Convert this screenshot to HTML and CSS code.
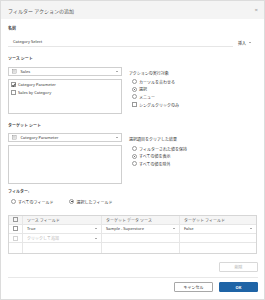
FILE: index.html
```html
<!DOCTYPE html>
<html>
<head>
<meta name="viewport" content="width=device-width, initial-scale=1">
<title>フィルター アクションの追加</title>
<link rel="stylesheet" href="styles.css">
</head>
<body>

<div class="dialog">
  <div class="titlebar">
    <span class="title">フィルター アクションの追加</span>
    <span class="close">×</span>
  </div>

  <div class="content">
    <div class="field-label">名前</div>
    <div class="name-row">
      <div class="name-input">Category Select</div>
      <div class="insert">挿入 <span class="caret"></span></div>
    </div>

    <!-- source sheet -->
    <div class="section-label source-label">ソース シート</div>
    <div class="sheet-row first-row">
      <div class="sheet-col">
        <div class="select">
          <svg class="sheet-icon" viewBox="0 0 6 6"><rect x="0.5" y="0.5" width="5" height="5" fill="none" stroke="#888" stroke-width="0.6"/><line x1="1.3" y1="2.2" x2="4.7" y2="2.2" stroke="#888" stroke-width="0.5"/><line x1="1.3" y1="3.8" x2="4.7" y2="3.8" stroke="#888" stroke-width="0.5"/></svg>
          <span class="select-text">Sales</span>
          <span class="caret"></span>
        </div>
        <div class="listbox source-list">
          <div class="check-item"><span class="cb checked"></span>Category Parameter</div>
          <div class="check-item"><span class="cb"></span>Sales by Category</div>
        </div>
      </div>
      <div class="option-col">
        <div class="option-title">アクションの実行対象</div>
        <div class="option-list">
          <div class="option"><span class="radio"></span>カーソルを合わせる</div>
          <div class="option"><span class="radio on"></span>選択</div>
          <div class="option"><span class="radio"></span>メニュー</div>
          <div class="option"><span class="cb"></span>シングルクリックのみ</div>
        </div>
      </div>
    </div>

    <!-- target sheet -->
    <div class="section-label target-label">ターゲット シート</div>
    <div class="sheet-row second-row">
      <div class="sheet-col">
        <div class="select">
          <svg class="sheet-icon" viewBox="0 0 6 6"><rect x="0.5" y="0.5" width="5" height="5" fill="none" stroke="#888" stroke-width="0.6"/><line x1="1.3" y1="2.2" x2="4.7" y2="2.2" stroke="#888" stroke-width="0.5"/><line x1="1.3" y1="3.8" x2="4.7" y2="3.8" stroke="#888" stroke-width="0.5"/></svg>
          <span class="select-text">Category Parameter</span>
          <span class="caret"></span>
        </div>
        <div class="listbox target-list"></div>
      </div>
      <div class="option-col">
        <div class="option-title">選択項目をクリアした結果</div>
        <div class="option-list clear-list">
          <div class="option"><span class="radio"></span>フィルターされた値を保持</div>
          <div class="option"><span class="radio on"></span>すべての値を表示</div>
          <div class="option"><span class="radio"></span>すべての値を除外</div>
        </div>
      </div>
    </div>

    <!-- filters -->
    <div class="section-label filter-label">フィルター:</div>
    <div class="filter-row">
      <div class="option"><span class="radio"></span>すべてのフィールド</div>
      <div class="option"><span class="radio on"></span>選択したフィールド</div>
    </div>

    <div class="grid">
      <div class="grid-row head">
        <div class="cell cb-cell"><span class="cb"></span></div>
        <div class="cell">ソース フィールド</div>
        <div class="cell">ターゲット データ ソース</div>
        <div class="cell">ターゲット フィールド</div>
      </div>
      <div class="grid-row">
        <div class="cell cb-cell"><span class="cb"></span></div>
        <div class="cell drop">True <span class="caret"></span></div>
        <div class="cell drop">Sample - Superstore <span class="caret"></span></div>
        <div class="cell drop">False <span class="caret"></span></div>
      </div>
      <div class="grid-row">
        <div class="cell cb-cell"><span class="cb faint"></span></div>
        <div class="cell drop muted">クリックして追加 <span class="caret"></span></div>
        <div class="cell"></div>
        <div class="cell"></div>
      </div>
      <div class="grid-row">
        <div class="cell cb-cell"></div>
        <div class="cell"></div>
        <div class="cell"></div>
        <div class="cell"></div>
      </div>
    </div>

    <div class="remove-row">
      <button class="btn disabled">削除</button>
    </div>
  </div>

  <div class="footer">
    <button class="btn">キャンセル</button>
    <button class="btn primary">OK</button>
  </div>
</div>

</body>
</html>
```

FILE: styles.css
```css
* {box-sizing: border-box}
body {
  margin: 0;
  font-family: "Noto Sans", "Noto Sans CJK JP", sans-serif;
  font-size: 4px;
  color: #333;
  background-color: #fff;
}
.dialog {
  width: 265px;
  height: 300px;
  border: 1px solid #dcdcdc;
  display: flex;
  flex-direction: column;
}
.titlebar {
  height: 18px;
  background-color: #f4f4f4;
  display: flex;
  align-items: center;
  justify-content: space-between;
  padding: 0 6px 0 7px;
}
.title {
  font-size: 5px;
  color: #555;
}
.close {
  font-size: 6px;
  color: #999;
}
.content {
  padding: 0 7px 0 7px;
  flex: 1;
}
.field-label,
.section-label {
  font-weight: bold;
  line-height: 6px;
  font-size: 4px;
  color: #444;
}
.field-label {
  margin-top: 7px;
}
.name-row {
  display: flex;
  align-items: center;
  margin-top: 6px;
  height: 9px;
}
.name-input {
  width: 225px;
  height: 9px;
  line-height: 8px;
  padding-left: 5px;
  border-bottom: 1px solid #e6e6e6;
}
.insert {
  margin-left: 5px;
  display: flex;
  align-items: center;
  gap: 3px;
}
.caret {
  display: inline-block;
  width: 0;
  height: 0;
  border-left: 1.3px solid transparent;
  border-right: 1.3px solid transparent;
  border-top: 1.6px solid #555;
}
.source-label {
  margin-top: 9px;
}
.sheet-row {
  display: flex;
  gap: 7px;
}
.first-row {
  margin-top: 5px;
}
.second-row {
  margin-top: 4px;
}
.sheet-col {
  width: 114px;
}
.select {
  height: 9px;
  border: 1px solid #cfcfcf;
  display: flex;
  align-items: center;
  padding: 0 3px 0 3px;
}
.sheet-icon {
  width: 4.5px;
  height: 4.5px;
}
.select-text {
  margin-left: 4px;
  flex: 1;
}
.listbox {
  margin-top: 3px;
  border: 1px solid #cfcfcf;
  padding: 1px 2px;
}
.source-list {
  height: 35px;
}
.target-list {
  height: 39px;
}
.check-item {
  display: flex;
  align-items: center;
  height: 7.5px;
}
.cb {
  display: inline-block;
  width: 5px;
  height: 5px;
  border: 1px solid #999;
  margin-right: 2px;
  flex-shrink: 0;
  position: relative;
}
.cb.checked::after {
  content: "";
  position: absolute;
  left: 0.8px;
  top: -0.2px;
  width: 1.4px;
  height: 2.6px;
  border-right: 0.6px solid #555;
  border-bottom: 0.6px solid #555;
  transform: rotate(40deg);
}
.cb.faint {
  border-color: #d4d4d4;
}
.option-col {
  flex: 1;
  padding-top: 4px;
}
.option-title {
  line-height: 6px;
}
.option-list {
  margin-top: 1px;
  padding-left: 3px;
}
.clear-list {
  margin-top: 2px;
}
.option {
  display: flex;
  align-items: center;
  height: 7.6px;
}
.radio {
  display: inline-block;
  width: 5px;
  height: 5px;
  border: 1px solid #999;
  border-radius: 50%;
  margin-right: 2px;
  flex-shrink: 0;
  position: relative;
}
.radio.on::after {
  content: "";
  position: absolute;
  left: 0.8px;
  top: 0.8px;
  width: 1.4px;
  height: 1.4px;
  border-radius: 50%;
  background-color: #444;
}
.target-label {
  margin-top: 9px;
}
.filter-label {
  margin-top: 5px;
}
.filter-row {
  display: flex;
  gap: 16px;
  margin-top: 3px;
  padding-left: 3px;
}
.grid {
  margin-top: 9px;
  border: 1px solid #d6d6d6;
}
.grid-row {
  display: grid;
  grid-template-columns: 13px 79px 78px 1fr;
  height: 9.25px;
  border-bottom: 1px solid #e6e6e6;
}
.grid-row:last-child {
  border-bottom: none;
}
.grid-row.head {
  background-color: #f5f5f5;
  color: #555;
}
.cell {
  display: flex;
  align-items: center;
  padding-left: 4px;
  border-left: 1px solid #e6e6e6;
}
.cell:first-child {
  border-left: none;
}
.cb-cell {
  padding-left: 4px;
}
.drop {
  justify-content: space-between;
  padding-right: 4px;
}
.muted {
  color: #b5b5b5;
}
.remove-row {
  display: flex;
  justify-content: flex-end;
  margin-top: 8px;
  margin-right: -1px;
}
.btn {
  width: 39px;
  height: 10px;
  padding: 0;
  font-family: inherit;
  font-size: 4px;
  background-color: #fff;
  border: 1px solid #a8a8a8;
  border-radius: 1px;
  color: #333;
}
.btn.disabled {
  border-color: #d8d8d8;
  color: #b0b0b0;
}
.btn.primary {
  background-color: #1f64a6;
  border-color: #1f64a6;
  color: #fff;
  font-weight: bold;
}
.footer {
  margin: 0 6px 0 7px;
  border-top: 1px solid #e8e8e8;
  display: flex;
  justify-content: flex-end;
  gap: 6px;
  padding: 4px 0 7px 0;
}
```
